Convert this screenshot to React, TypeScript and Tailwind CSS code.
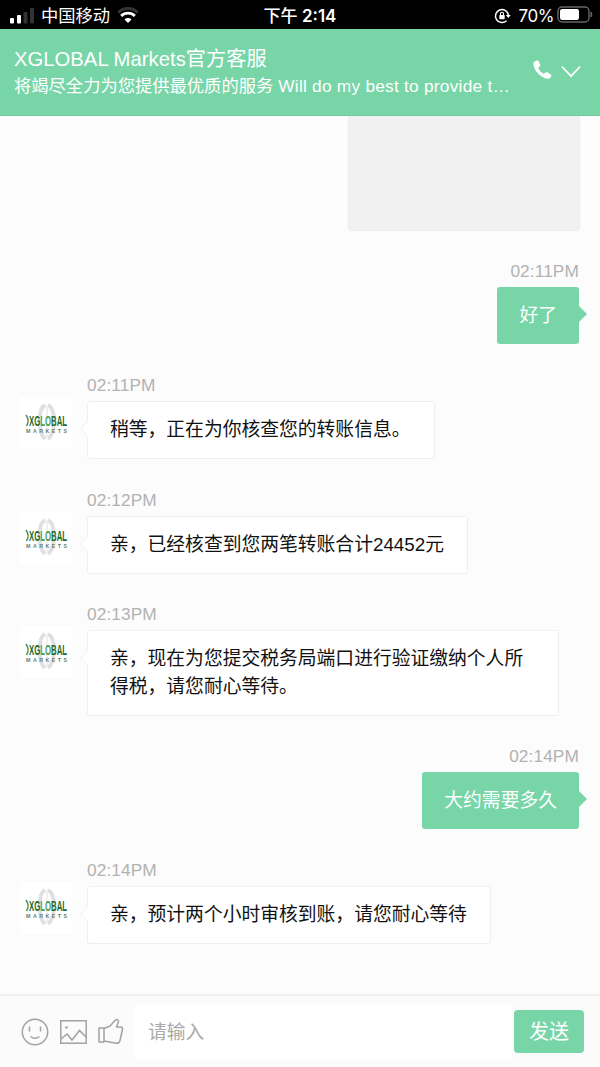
import React from 'react';

interface Message {
  id: number;
  mine?: boolean;
  time: string;
  text: string;
  className: string;
  bubbleClass: string;
}

const messages: Message[] = [
  { id: 1, mine: true, time: '02:11PM', text: '好了', className: 'mt-7', bubbleClass: 'h-[57px]' },
  { id: 2, time: '02:11PM', text: '稍等，正在为你核查您的转账信息。', className: 'mt-[29px]', bubbleClass: 'h-[58px] w-[348px]' },
  { id: 3, time: '02:12PM', text: '亲，已经核查到您两笔转账合计24452元', className: 'mt-[29px]', bubbleClass: 'h-[58px] w-[381px]' },
  { id: 4, time: '02:13PM', text: '亲，现在为您提交税务局端口进行验证缴纳个人所得税，请您耐心等待。', className: 'mt-7', bubbleClass: 'h-[86px] w-[472px]' },
  { id: 5, mine: true, time: '02:14PM', text: '大约需要多久', className: 'mt-7', bubbleClass: 'h-[57px]' },
  { id: 6, time: '02:14PM', text: '亲，预计两个小时审核到账，请您耐心等待', className: 'mt-[29px]', bubbleClass: 'h-[58px] w-[404px]' },
];

function StatusBar() {
  return (
    <div className="grid h-[29px] shrink-0 grid-cols-[1fr_auto_1fr] items-center bg-black pt-0.5 font-['Inter','Noto_Sans_CJK_SC',sans-serif] text-white">
      <div className="flex items-center pl-[9px]">
        <svg width="26" height="16" viewBox="0 0 26 16" fill="currentColor">
          <rect x="1" y="10" width="4" height="5.5" rx="1" />
          <rect x="8" y="7" width="4" height="8.5" rx="1" />
          <rect x="14.5" y="4" width="4" height="11.5" rx="1" fill="#333" />
          <rect x="21" y="0" width="4" height="15.5" rx="1" fill="#333" />
        </svg>
        <span className="ml-[6px] text-[17.3px] leading-6">中国移动</span>
        <svg className="ml-[7px]" width="22" height="17" viewBox="0 0 22 17" fill="none" strokeWidth="2.8">
          <path d="M1.3 5.4a14 14 0 0 1 19.4 0" stroke="#333" />
          <path d="M4.2 9a9.6 9.6 0 0 1 13.6 0" stroke="white" />
          <path d="M7.5 12.4a5 5 0 0 1 7 0L11 16z" fill="white" />
        </svg>
      </div>
      <div className="text-[17px] font-semibold leading-6">
        <span className="font-medium">下午</span> 2:14
      </div>
      <div className="flex items-center justify-end pr-[7px]">
        <svg width="17" height="16" viewBox="0 0 17 16" fill="none" stroke="white" strokeWidth="1.5">
          <path d="M12.5 12.8A6.5 6.5 0 1 1 14.4 7" />
          <path d="M11.8 7h5l-2.5 3z" fill="white" stroke="none" />
          <rect x="5.3" y="7" width="5.4" height="4.3" rx=".7" fill="white" stroke="none" />
          <path d="M6.5 7V5.7a1.5 1.5 0 0 1 3 0V7" strokeWidth="1.1" />
        </svg>
        <span className="ml-[7px] text-[17px] leading-6 tracking-[-0.4px]">70%</span>
        <svg className="ml-[3px] mb-0.5" width="36" height="17" viewBox="0 0 36 17">
          <rect x="1" y="1" width="31" height="15" rx="4" fill="none" stroke="#666" strokeWidth="1.4" />
          <rect x="3" y="3" width="19" height="11" rx="2.2" fill="white" />
          <path d="M34 6v5q2-2.5 0-5z" fill="#666" stroke="#666" />
        </svg>
      </div>
    </div>
  );
}

function Header() {
  return (
    <header className="flex h-[87px] shrink-0 items-start border-b border-[#72c79e] bg-[#78d5a8] text-white">
      <div className="ml-[14px] w-[510px] whitespace-nowrap pt-4">
        <h1 className="text-[20.2px] leading-7 tracking-[0.06px]">XGLOBAL Markets官方客服</h1>
        <p className="text-[17.3px] leading-[26px]">
          将竭尽全力为您提供最优质的服务<span className="tracking-[0.24px]"> Will do my best to provide t…</span>
        </p>
      </div>
      <svg className="ml-[9px] mt-[31px]" width="19" height="20" viewBox="0 0 19 20" fill="currentColor">
        <path d="M2.1 1.3 4 .4q1-.3 1.5.6l1.7 3.7q.4 1-.4 1.7L5.2 7.7c1.2 2.9 3 4.8 5.7 6.1l1.7-1.4q.8-.6 1.7-.1l3.5 2.1q.9.6.5 1.5l-.8 1.7c-.5 1-1.6 1.3-2.8 1.1C7.5 17.6 1.4 11.1.4 4.4.2 3 .8 1.9 2.1 1.3z" />
      </svg>
      <svg className="ml-[9px] mt-[36px]" width="20" height="13" viewBox="0 0 20 13" fill="none" stroke="currentColor" strokeWidth="1.7">
        <path d="M.8 1.5 10 11.2l9.2-9.7" />
      </svg>
    </header>
  );
}

function Avatar() {
  return (
    <svg className="mt-6 shrink-0" width="52" height="52" viewBox="0 0 52 52">
      <rect width="52" height="52" fill="white" />
      <g fill="none" stroke="#e0e0e4" strokeWidth="4">
        <path d="M25 8Q19.500 11 19.500 24T25 42" />
        <path d="M28 8Q34 11 34 24T28 42" />
        <path d="M27 8v34" strokeWidth="2" stroke="#f0f0f3" />
      </g>
      <path d="M6 18q4 5.500.5 11" fill="none" stroke="#4d9150" strokeWidth="1.5" />
      <g fontFamily="Liberation Sans, sans-serif" fontWeight="bold">
        <text x="9" y="29" fontSize="14.5" textLength="38" lengthAdjust="spacingAndGlyphs" fill="#1d6a2b">
          XG<tspan fill="#4f9d52">LO</tspan>BAL
        </text>
        <text x="6" y="36" fontSize="5.3" textLength="41" fill="#68806c">MARKETS</text>
      </g>
    </svg>
  );
}

function MessageRow({ message }: { message: Message }) {
  if (message.mine) {
    return (
      <div className={`flex flex-col items-end pr-[21px] ${message.className}`}>
        <time className="mb-1 text-[17.3px] leading-6 tracking-[0.1px] text-[#b2b2b2]">{message.time}</time>
        <div className={`relative rounded-[3px] bg-[#78d5a8] px-[22px] pt-[15px] text-[18.8px] leading-7 text-white ${message.bubbleClass}`}>
          {message.text}
          <svg className="absolute left-full top-[19px]" width="8" height="16" viewBox="0 0 8 16">
            <path d="M0 0 8 8 0 16z" fill="#78d5a8" />
          </svg>
        </div>
      </div>
    );
  }

  return (
    <div className={`flex items-start pl-5 ${message.className}`}>
      <Avatar />
      <div className="ml-[15px]">
        <time className="mb-1 block text-[17.3px] leading-6 tracking-[0.1px] text-[#b2b2b2]">{message.time}</time>
        <div className={`relative rounded-[3px] border border-[#efefef] bg-white pl-[22px] pr-[21px] pt-[14px] text-[18.8px] leading-7 text-[#111] ${message.bubbleClass}`}>
          {message.text}
          <svg className="absolute right-full top-[18px]" width="8" height="18" viewBox="0 0 8 18">
            <path d="M8 1 1 9l7 8" fill="white" stroke="#f0f0f0" />
          </svg>
        </div>
      </div>
    </div>
  );
}

function InputBar() {
  return (
    <footer className="flex h-[73px] shrink-0 items-center border-t-2 border-[#efefef] bg-[#fbfbfb]">
      <div className="ml-[21px] flex items-center gap-[11px] text-[#a2a2a2]">
        <svg width="28" height="28" viewBox="0 0 28 28" fill="none" stroke="currentColor" strokeWidth="1.5">
          <circle cx="14" cy="14" r="12.7" />
          <path d="M8.500 8.500v5M19.500 8.500v5M9.500 18.500q4.500 3.500 9 0" />
        </svg>
        <svg width="27" height="24" viewBox="0 0 27 24" fill="none" stroke="currentColor" strokeWidth="1.5">
          <rect x=".8" y=".8" width="25.4" height="22.4" />
          <path d="m1 19 6-5 5 6 7.5-9.5L26 17" />
          <circle cx="6.5" cy="7.5" r="1.3" fill="currentColor" stroke="none" />
        </svg>
        <svg width="26" height="28" viewBox="0 0 26 28" fill="none" stroke="currentColor" strokeWidth="1.5" strokeLinejoin="round">
          <path d="M1 10h5v14H1zM6 10.500l6-2.500 5-5.500q1.500-1.500 3-.5 1 1 .3 2.500L18.500 9H23q2 .5 1.500 2.500l-2.500 11q-.8 3-3.500 2.800L6 23" />
        </svg>
      </div>
      <div className="ml-[10px] flex h-[56px] w-[378px] items-center rounded bg-white pl-[14px] pt-[3px]">
        <input
          className="w-full bg-transparent text-[18.8px] outline-none placeholder:text-[#a9a9a9]"
          placeholder="请输入"
        />
      </div>
      <button className="ml-[2px] h-[43px] w-[70px] rounded bg-[#78d5a8] pt-px text-[20px] text-white">发送</button>
    </footer>
  );
}

export default function App() {
  return (
    <div className="flex h-[1067px] w-[600px] flex-col overflow-hidden bg-[#fcfcfc] font-['Liberation_Sans','Noto_Sans_CJK_SC',sans-serif]">
      <StatusBar />
      <Header />
      <main className="min-h-0 flex-1 overflow-hidden">
        <div className="ml-[348px] h-[115px] w-[232px] rounded-b border border-t-0 border-[#eeeeee] bg-[#f1f1f1]" />
        {messages.map((message) => (
          <MessageRow key={message.id} message={message} />
        ))}
      </main>
      <InputBar />
    </div>
  );
}
